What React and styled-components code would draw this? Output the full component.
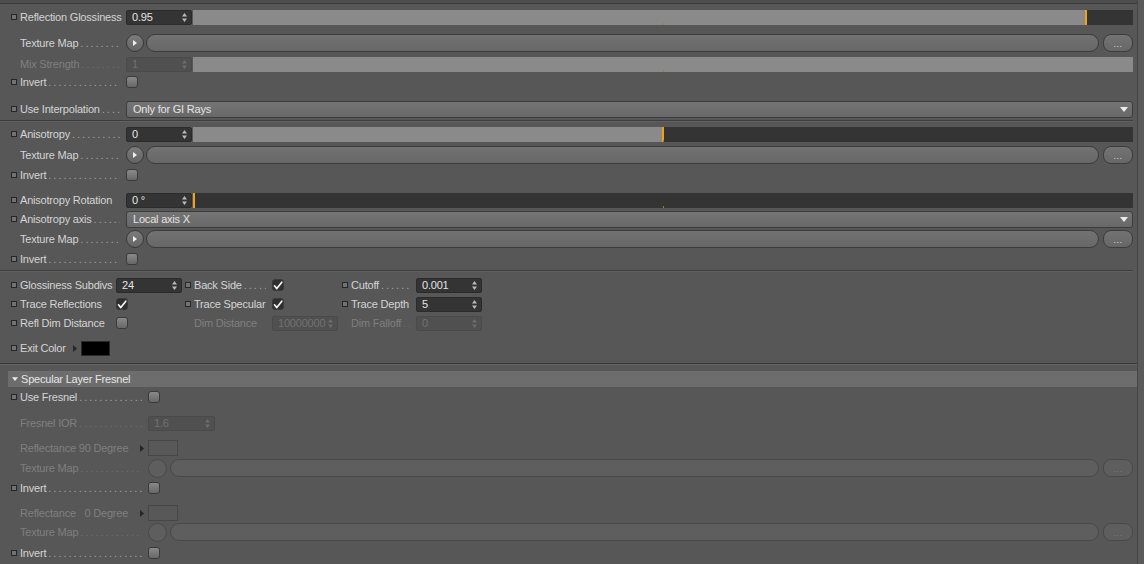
import React from 'react';
import styled, { createGlobalStyle } from 'styled-components';

const GlobalStyle = createGlobalStyle`
  html, body {
    margin: 0;
    padding: 0;
    background: #575757;
  }
  body {
    font-family: "Liberation Sans", Arial, sans-serif;
    font-size: 11px;
    letter-spacing: -0.2px;
    color: #d4d4d4;
  }
`;

const Page = styled.div`
  display: flex;
  width: 1144px;
  height: 564px;
  overflow: hidden;
  background: #575757;
`;

const Panel = styled.div`
  flex: 1;
  display: flex;
  flex-direction: column;
  padding: 0 4px 0 8px;
`;

const ScrollEdge = styled.div`
  width: 6px;
  border-left: 1px solid #474747;
  background: #5a5a5a;
`;

const TopEdge = styled.div`
  height: 3px;
  margin: 0 -4px 0 -8px;
  background: #4d4d4d;
  border-bottom: 1px solid #3b3b3b;
`;

const Row = styled.div`
  display: flex;
  align-items: center;
  height: 18px;
  margin-top: ${(p) => p.$mt || 0}px;
  padding-left: 3px;
`;

const GridRow = styled.div`
  display: grid;
  grid-template-columns: 174px 157px 1fr;
  align-items: center;
  height: 18px;
  margin-top: ${(p) => p.$mt || 0}px;
  padding-left: 3px;
`;

const Cell = styled.div`
  display: flex;
  align-items: center;
`;

const Mark = styled.span`
  flex: none;
  width: 4px;
  height: 4px;
  margin-right: 3px;
  border: 1px solid #262626;
  background: #727272;
  visibility: ${(p) => (p.$off ? 'hidden' : 'visible')};
`;

const Label = styled.span`
  flex: none;
  display: flex;
  width: ${(p) => p.$w}px;
  overflow: hidden;
  white-space: pre;
  color: ${(p) => (p.$dim ? '#7f7f7f' : '#d4d4d4')};
`;

const Leader = styled.span`
  flex: 1;
  overflow: hidden;
  white-space: nowrap;
  padding-left: 2px;
  margin-right: 6px;
  letter-spacing: 2px;
  opacity: 0.6;
`;

const NumField = styled.div`
  flex: none;
  box-sizing: border-box;
  width: ${(p) => p.$w || 66}px;
  height: 15px;
  display: flex;
  align-items: center;
  justify-content: space-between;
  padding: 0 4px 0 5px;
  border: 1px solid ${(p) => (p.$dim ? '#4a4a4a' : '#2b2b2b')};
  border-radius: 2px;
  background: ${(p) => (p.$dim ? '#505050' : '#343434')};
  color: ${(p) => (p.$dim ? '#707070' : '#e4e4e4')};
`;

const Track = styled.div`
  position: relative;
  flex: 1;
  height: 15px;
  margin-left: 1px;
  background: #343434;
  overflow: hidden;
`;

const Fill = styled.div`
  height: 100%;
  background: #8a8a8a;
`;

const Knob = styled.div`
  position: absolute;
  top: 0;
  bottom: 0;
  width: 2px;
  background: #f2a20c;
`;

const Tick = styled.div`
  position: absolute;
  left: 50%;
  bottom: 0;
  width: 1px;
  height: 2px;
  background: #a27b35;
`;

const RoundBtn = styled.div`
  flex: none;
  box-sizing: border-box;
  width: ${(p) => p.$size}px;
  height: ${(p) => p.$size}px;
  display: flex;
  align-items: center;
  justify-content: center;
  border-radius: 50%;
  border: 1px solid ${(p) => (p.$dim ? '#494949' : '#3a3a3a')};
  background: ${(p) => (p.$dim ? '#5e5e5e' : 'linear-gradient(#7c7c7c, #646464)')};
`;

const Pill = styled.div`
  flex: 1;
  box-sizing: border-box;
  height: 18px;
  margin-left: ${(p) => p.$gap}px;
  border-radius: 9px;
  border: 1px solid ${(p) => (p.$dim ? '#494949' : '#3c3c3c')};
  background: ${(p) => (p.$dim ? '#5e5e5e' : 'linear-gradient(#737373, #676767)')};
`;

const MoreBtn = styled.div`
  flex: none;
  box-sizing: border-box;
  width: 30px;
  height: 18px;
  margin-left: 4px;
  display: flex;
  align-items: flex-end;
  justify-content: center;
  padding-bottom: 3px;
  border-radius: 8px;
  border: 1px solid ${(p) => (p.$dim ? '#494949' : '#3c3c3c')};
  background: ${(p) => (p.$dim ? '#5e5e5e' : 'linear-gradient(#737373, #676767)')};
  color: ${(p) => (p.$dim ? '#7a7a7a' : '#dcdcdc')};
  font-size: 9px;
  line-height: 8px;
  letter-spacing: 0.5px;
`;

const Select = styled.div`
  flex: 1;
  box-sizing: border-box;
  height: 17px;
  display: flex;
  align-items: center;
  justify-content: space-between;
  padding: 0 4px 0 6px;
  border: 1px solid #3c3c3c;
  border-radius: 3px;
  background: linear-gradient(#757575, #686868);
  color: #e4e4e4;
`;

const Check = styled.div`
  flex: none;
  box-sizing: border-box;
  width: 12px;
  height: 12px;
  display: flex;
  align-items: center;
  justify-content: center;
  border-radius: 3px;
  border: 1px solid #3a3a3a;
  background: ${(p) => (p.$on ? '#2f2f2f' : 'linear-gradient(#8a8a8a, #676767)')};
`;

const Swatch = styled.div`
  flex: none;
  box-sizing: border-box;
  width: ${(p) => p.$w}px;
  height: ${(p) => p.$h}px;
  margin-left: 4px;
  border: 1px solid ${(p) => (p.$color ? '#2a2a2a' : '#474747')};
  background: ${(p) => p.$color || '#585858'};
`;

const Separator = styled.div`
  height: 1px;
  margin: ${(p) => p.$mt}px 0 0 -8px;
  background: #3e3e3e;
  box-shadow: 0 1px 0 #616161;
`;

const SectionEnd = styled.div`
  height: 1px;
  margin: ${(p) => p.$mt}px -4px 0 -8px;
  background: #393939;
  box-shadow: 0 1px 0 #666666;
`;

const GroupHeader = styled.div`
  display: flex;
  align-items: center;
  gap: 3px;
  height: 16px;
  margin: 7px -4px 0 0;
  padding-left: 4px;
  background: #6d6d6d;
  color: #e6e6e6;
`;

const DOTS = '..............................................';

const Spinner = ({ dim }) => (
  <svg width="5" height="9" viewBox="0 0 5 9">
    <path d="M2.5 0 L5 3.5 H0 Z M0 5.5 H5 L2.5 9 Z" fill={dim ? '#6c6c6c' : '#b8b8b8'} />
  </svg>
);

const PlayArrow = ({ color = '#f0f0f0' }) => (
  <svg width="4" height="6" viewBox="0 0 4 6">
    <path d="M0 0 L4 3 L0 6 Z" fill={color} />
  </svg>
);

const SideArrow = () => (
  <svg width="4" height="7" viewBox="0 0 4 7" style={{ flex: 'none' }}>
    <path d="M0 0 L4 3.5 L0 7 Z" fill="#262626" />
  </svg>
);

const DownArrow = ({ w = 8, h = 5 }) => (
  <svg width={w} height={h} viewBox="0 0 8 5">
    <path d="M0 0 H8 L4 5 Z" fill="#ececec" />
  </svg>
);

const Tickmark = () => (
  <svg width="10" height="9" viewBox="0 0 10 9">
    <path d="M1.5 4.8 L3.8 7.6 L8.8 1.2" stroke="#f4f4f4" strokeWidth="1.7" fill="none" strokeLinecap="round" strokeLinejoin="round" />
  </svg>
);

const Name = ({ w, dim, leader, mark = true, children }) => (
  <>
    <Mark $off={!mark} />
    <Label $w={w} $dim={dim}>
      {children}
      {leader && <Leader>{DOTS}</Leader>}
    </Label>
  </>
);

const NumberBox = ({ value, dim, w }) => (
  <NumField $dim={dim} $w={w}>
    <span>{value}</span>
    <Spinner dim={dim} />
  </NumField>
);

const Slider = ({ value, dim }) => (
  <Track>
    <Fill style={{ width: `${value * 100}%` }} />
    {!dim && <Knob style={{ left: `calc(${value * 100}% - ${value > 0 ? 1 : 0}px)` }} />}
    <Tick />
  </Track>
);

const TextureSlot = ({ dim, size = 18, gap = 2 }) => (
  <>
    <RoundBtn $size={size} $dim={dim}>{!dim && <PlayArrow />}</RoundBtn>
    <Pill $gap={gap} $dim={dim} />
    <MoreBtn $dim={dim}>...</MoreBtn>
  </>
);

const MAIN = 106;
const FRESNEL = 128;

export default function App() {
  return (
    <Page>
      <GlobalStyle />
      <Panel>
        <TopEdge />

        <Row $mt={4}>
          <Name w={MAIN}>Reflection Glossiness</Name>
          <NumberBox value="0.95" />
          <Slider value={0.95} />
        </Row>
        <Row $mt={8}>
          <Name w={MAIN} leader mark={false}>Texture Map</Name>
          <TextureSlot />
        </Row>
        <Row $mt={3}>
          <Name w={MAIN} leader mark={false} dim>Mix Strength</Name>
          <NumberBox value="1" dim />
          <Slider value={1} dim />
        </Row>
        <Row>
          <Name w={MAIN} leader>Invert</Name>
          <Check />
        </Row>
        <Row $mt={9}>
          <Name w={MAIN} leader>Use Interpolation</Name>
          <Select>
            <span>Only for GI Rays</span>
            <DownArrow />
          </Select>
        </Row>

        <Separator $mt={2} />

        <Row $mt={4}>
          <Name w={MAIN} leader>Anisotropy</Name>
          <NumberBox value="0" />
          <Slider value={0.5} />
        </Row>
        <Row $mt={3}>
          <Name w={MAIN} leader mark={false}>Texture Map</Name>
          <TextureSlot />
        </Row>
        <Row $mt={2}>
          <Name w={MAIN} leader>Invert</Name>
          <Check />
        </Row>
        <Row $mt={7}>
          <Name w={MAIN}>Anisotropy Rotation</Name>
          <NumberBox value="0 °" />
          <Slider value={0} />
        </Row>
        <Row $mt={1}>
          <Name w={MAIN} leader>Anisotropy axis</Name>
          <Select>
            <span>Local axis X</span>
            <DownArrow />
          </Select>
        </Row>
        <Row $mt={2}>
          <Name w={MAIN} leader mark={false}>Texture Map</Name>
          <TextureSlot />
        </Row>
        <Row $mt={2}>
          <Name w={MAIN} leader>Invert</Name>
          <Check />
        </Row>

        <Separator $mt={2} />

        <GridRow $mt={5}>
          <Cell>
            <Name w={96}>Glossiness Subdivs</Name>
            <NumberBox value="24" />
          </Cell>
          <Cell>
            <Name w={78} leader>Back Side</Name>
            <Check $on><Tickmark /></Check>
          </Cell>
          <Cell>
            <Name w={65} leader>Cutoff</Name>
            <NumberBox value="0.001" />
          </Cell>
        </GridRow>
        <GridRow $mt={1}>
          <Cell>
            <Name w={96}>Trace Reflections</Name>
            <Check $on><Tickmark /></Check>
          </Cell>
          <Cell>
            <Name w={78}>Trace Specular</Name>
            <Check $on><Tickmark /></Check>
          </Cell>
          <Cell>
            <Name w={65}>Trace Depth</Name>
            <NumberBox value="5" />
          </Cell>
        </GridRow>
        <GridRow $mt={1}>
          <Cell>
            <Name w={96}>Refl Dim Distance</Name>
            <Check />
          </Cell>
          <Cell>
            <Name w={78} mark={false} dim>Dim Distance</Name>
            <NumberBox value="10000000" dim />
          </Cell>
          <Cell>
            <Name w={65} mark={false} dim leader>Dim Falloff</Name>
            <NumberBox value="0" dim />
          </Cell>
        </GridRow>
        <Row $mt={7}>
          <Name w={53}>Exit Color</Name>
          <SideArrow />
          <Swatch $w={29} $h={15} $color="#000000" />
        </Row>

        <SectionEnd $mt={6} />

        <GroupHeader>
          <DownArrow w={6} h={4} />
          <span>Specular Layer Fresnel</span>
        </GroupHeader>

        <Row $mt={1}>
          <Name w={FRESNEL} leader>Use Fresnel</Name>
          <Check />
        </Row>
        <Row $mt={8}>
          <Name w={FRESNEL} leader mark={false} dim>Fresnel IOR</Name>
          <NumberBox value="1.6" dim w={67} />
        </Row>
        <Row $mt={7}>
          <Name w={120} mark={false} dim>Reflectance 90 Degree</Name>
          <SideArrow />
          <Swatch $w={30} $h={16} />
        </Row>
        <Row $mt={2}>
          <Name w={FRESNEL} leader mark={false} dim>Texture Map</Name>
          <TextureSlot dim size={19} gap={3} />
        </Row>
        <Row $mt={2}>
          <Name w={FRESNEL} leader>Invert</Name>
          <Check />
        </Row>
        <Row $mt={7}>
          <Name w={120} mark={false} dim>{'Reflectance   0 Degree'}</Name>
          <SideArrow />
          <Swatch $w={30} $h={16} />
        </Row>
        <Row $mt={1}>
          <Name w={FRESNEL} leader mark={false} dim>Texture Map</Name>
          <TextureSlot dim size={19} gap={3} />
        </Row>
        <Row $mt={3}>
          <Name w={FRESNEL} leader>Invert</Name>
          <Check />
        </Row>
      </Panel>
      <ScrollEdge />
    </Page>
  );
}
